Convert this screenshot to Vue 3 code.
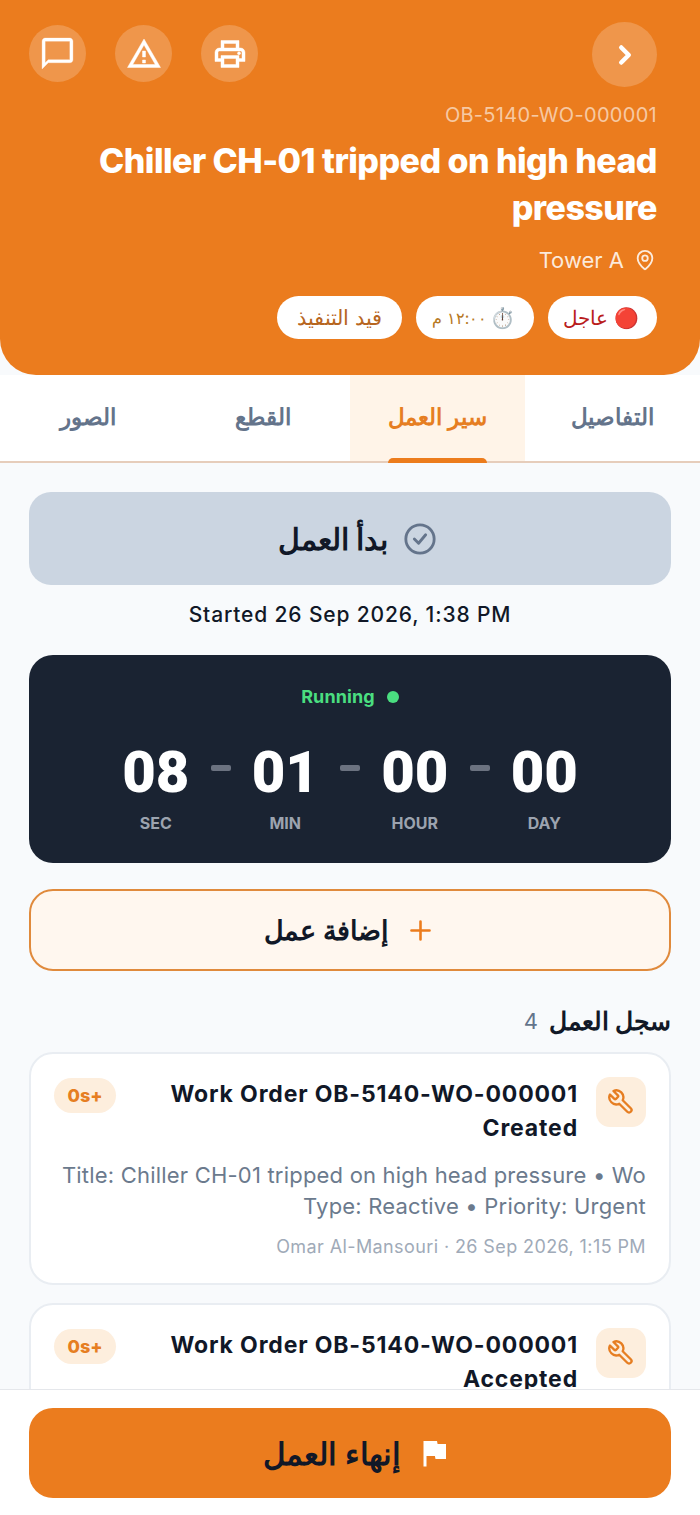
<template>
  <div class="page" dir="rtl">
    <header class="hero">
      <div class="hero-top">
        <button class="back">
          <svg width="30" height="30" viewBox="0 0 24 24" fill="none" stroke="#fff" stroke-width="3.6" stroke-linecap="round" stroke-linejoin="round"><path d="m9 18 6-6-6-6" /></svg>
        </button>
        <div class="actions">
          <button class="round">
            <svg width="36" height="36" viewBox="0 0 24 24" fill="#fff" stroke="#fff" stroke-width="0.3"><path d="M19 8h-1V3H6v5H5c-1.66 0-3 1.34-3 3v6h4v4h12v-4h4v-6c0-1.66-1.34-3-3-3zM8 5h8v3H8V5zm8 12v2H8v-4h8v2zm2-2v-2H6v2H4v-4c0-.55.45-1 1-1h14c.55 0 1 .45 1 1v4h-2z" /><circle cx="18" cy="11.5" r="1" /></svg>
          </button>
          <button class="round">
            <svg width="36" height="36" viewBox="0 0 24 24" fill="#fff" stroke="#fff" stroke-width="0.3"><path d="M12 5.99 19.53 19H4.47L12 5.99M12 2 1 21h22L12 2zm1 14h-2v2h2v-2zm0-6h-2v4h2v-4z" /></svg>
          </button>
          <button class="round">
            <svg width="37" height="37" viewBox="0 0 24 24" fill="#fff" stroke="#fff" stroke-width="0.2"><path d="M20 2H4c-1.1 0-2 .9-2 2v18l4-4h14c1.1 0 2-.9 2-2V4c0-1.1-.9-2-2-2zm0 14H6l-2 2V4h16v12z" /></svg>
          </button>
        </div>
      </div>
      <div class="code">OB-5140-WO-000001</div>
      <h1 class="title">Chiller CH-01 tripped on high head pressure</h1>
      <div class="place">
        <svg width="22" height="22" viewBox="0 0 24 24" fill="none" stroke="currentColor" stroke-width="2" stroke-linecap="round" stroke-linejoin="round"><path d="M20 10c0 4.99-5.54 10.19-7.4 11.8a1 1 0 0 1-1.2 0C9.54 20.19 4 14.99 4 10a8 8 0 0 1 16 0" /><circle cx="12" cy="10" r="3" /></svg>
        <span>Tower A</span>
      </div>
      <div class="chips">
        <span class="chip urgent">🔴 عاجل</span>
        <span class="chip time"><span class="clock-emoji">⏱️</span><span class="time-text">١٢:٠٠ م</span></span>
        <span class="chip status">قيد التنفيذ</span>
      </div>
    </header>

    <nav class="tabs">
      <div v-for="t in tabs" :key="t" class="tab" :class="{ active: t === activeTab }">
        <span class="tab-label">{{ t }}</span>
      </div>
    </nav>

    <main class="content">
      <button class="start-btn">
        <svg width="34" height="34" viewBox="0 0 24 24" fill="none" stroke="#64748b" stroke-width="2" stroke-linecap="round" stroke-linejoin="round"><circle cx="12" cy="12" r="10" /><path d="m8 12 3 3 5-6" /></svg>
        <span>بدأ العمل</span>
      </button>
      <p class="started" dir="ltr">Started 26 Sep 2026, 1:38 PM</p>

      <section class="timer">
        <div class="running"><i class="dot"></i><span>Running</span></div>
        <div class="clock">
          <template v-for="(c, i) in clock" :key="c.label">
            <i v-if="i > 0" class="sep"></i>
            <div class="unit">
              <b>{{ c.value }}</b>
              <small>{{ c.label }}</small>
            </div>
          </template>
        </div>
      </section>

      <button class="add-btn">
        <svg width="31" height="31" viewBox="0 0 24 24" fill="none" stroke="#ec7c1c" stroke-width="2" stroke-linecap="round"><path d="M5 12h14M12 5v14" /></svg>
        <span>إضافة عمل</span>
      </button>

      <div class="log-head">
        <span class="log-title">سجل العمل</span>
        <span class="log-count">4</span>
      </div>

      <article v-for="(e, i) in entries" :key="i" class="entry">
        <div class="entry-top">
          <div class="tile">
            <svg width="28" height="28" viewBox="0 0 24 24" fill="none" stroke="#e67e22" stroke-width="2" stroke-linecap="round" stroke-linejoin="round"><path d="M9.3 6.3a1 1 0 0 1 0 1.4L7.7 9.3a1 1 0 0 1-1.4 0L2.53 5.53a6 6 0 0 0 7.94 7.94l6.91 6.91a2.12 2.12 0 0 0 3-3l-6.91-6.91a6 6 0 0 0-7.94-7.94l3.76 3.76z" /></svg>
          </div>
          <h3>{{ e.title }}</h3>
          <span class="badge" dir="ltr">0s+</span>
        </div>
        <p class="desc">{{ e.desc }}</p>
        <p class="meta">{{ e.meta }}</p>
      </article>
    </main>

    <footer class="bottom">
      <button class="finish-btn">
        <svg width="36" height="36" viewBox="0 0 24 24" fill="#fff"><path d="M14.4 6 14 4H5v17h2v-7h5.6l.4 2h7V6z" /></svg>
        <span>إنهاء العمل</span>
      </button>
    </footer>
  </div>
</template>

<script setup>
const tabs = ['التفاصيل', 'سير العمل', 'القطع', 'الصور']
const activeTab = 'سير العمل'

const clock = [
  { value: '00', label: 'DAY' },
  { value: '00', label: 'HOUR' },
  { value: '01', label: 'MIN' },
  { value: '08', label: 'SEC' }
]

const entries = [
  {
    title: 'Work Order OB-5140-WO-000001 Created',
    desc: 'Title: Chiller CH-01 tripped on high head pressure • Wo Type: Reactive • Priority: Urgent',
    meta: 'Omar Al-Mansouri · 26 Sep 2026, 1:15 PM'
  },
  {
    title: 'Work Order OB-5140-WO-000001 Accepted',
    desc: 'Accepted by Omar Al-Mansouri',
    meta: 'Omar Al-Mansouri · 26 Sep 2026, 1:20 PM'
  }
]
</script>

<style>
html, body { margin: 0; background: #f8fafc; }
</style>

<style scoped>
.page {
  width: 700px;
  height: 1515px;
  display: flex;
  flex-direction: column;
  overflow: hidden;
  background: #f8fafc;
  font-family: Inter, sans-serif;
  color: #111827;
}

button {
  border: none;
  font-family: inherit;
  padding: 0;
}

.hero {
  flex: none;
  height: 375px;
  box-sizing: border-box;
  padding: 22px 43px 0 29px;
  background: #eb7c1e;
  border-radius: 0 0 36px 36px;
  color: #fff;
}

.hero-top {
  display: flex;
  justify-content: space-between;
  align-items: center;
  height: 65px;
}

.back {
  width: 65px;
  height: 65px;
  border-radius: 50%;
  background: rgba(255, 255, 255, 0.2);
  display: flex;
  align-items: center;
  justify-content: center;
}

.actions {
  display: flex;
  gap: 29px;
  margin-top: -2px;
}

.round {
  width: 57px;
  height: 57px;
  border-radius: 50%;
  background: rgba(255, 255, 255, 0.2);
  display: flex;
  align-items: center;
  justify-content: center;
}

.code {
  margin-top: 16px;
  font-size: 20px;
  line-height: 24px;
  color: rgba(255, 255, 255, 0.6);
  direction: ltr;
  text-align: right;
  letter-spacing: 0.3px;
}

.title {
  margin: 10px 0 0;
  font-size: 34px;
  line-height: 47px;
  font-weight: 800;
  letter-spacing: -0.55px;
  text-align: right;
}

.place {
  margin-top: 14px;
  display: flex;
  align-items: center;
  gap: 10px;
  font-size: 22px;
  line-height: 30px;
  color: rgba(255, 255, 255, 0.85);
}

.place svg {
  margin-right: 1px;
}

.chips {
  margin-top: 21px;
  display: flex;
  gap: 14px;
}

.chip {
  height: 43px;
  display: flex;
  align-items: center;
  padding: 0 18px;
  border-radius: 22px;
  background: #fff;
  font-size: 20px;
}

.urgent {
  color: #b91c1c;
  padding-left: 15px;
}

.time {
  color: #b7791f;
  gap: 3px;
  padding-right: 19px;
  padding-left: 16px;
}

.time-text {
  font-size: 16px;
  white-space: nowrap;
}

.status {
  color: #b7661f;
  font-size: 21px;
  padding: 0 20px;
}

.tabs {
  flex: none;
  height: 88px;
  display: grid;
  grid-template-columns: repeat(4, 1fr);
  background: #fff;
  border-bottom: 2px solid #e6cdbb;
  box-sizing: border-box;
}

.tab {
  display: flex;
  justify-content: center;
  color: #64748b;
  font-size: 23px;
  font-weight: 700;
}

.tab-label {
  height: 86px;
  line-height: 84px;
  position: relative;
}

.tab.active {
  background: #fff4e8;
  color: #e67e22;
}

.tab.active .tab-label::after {
  content: "";
  position: absolute;
  left: 0;
  right: 0;
  bottom: -2px;
  height: 5px;
  border-radius: 5px 5px 0 0;
  background: #ec7c1c;
}

.content {
  flex: 1;
  min-height: 0;
  overflow: hidden;
  padding: 29px 29px 0;
}

.start-btn {
  width: 100%;
  height: 93px;
  border-radius: 22px;
  background: #cbd5e1;
  display: flex;
  align-items: center;
  justify-content: center;
  gap: 15px;
  font-size: 30px;
  font-weight: 700;
  color: #111827;
}

.start-btn span,
.finish-btn span {
  padding-left: 15px;
}

.started {
  margin: 16px 0 0;
  text-align: center;
  font-size: 21px;
  line-height: 28px;
  font-weight: 500;
  letter-spacing: 0.85px;
  color: #111827;
}

.timer {
  margin-top: 26px;
  height: 208px;
  box-sizing: border-box;
  padding-top: 30px;
  border-radius: 24px;
  background: #1a2332;
  color: #fff;
}

.running {
  display: flex;
  align-items: center;
  justify-content: center;
  gap: 12px;
  color: #4ade80;
  font-size: 18px;
  line-height: 24px;
  font-weight: 700;
  letter-spacing: 0.1px;
}

.dot {
  width: 12px;
  height: 12px;
  border-radius: 50%;
  background: #4ade80;
}

.clock {
  margin-top: 31px;
  display: flex;
  justify-content: center;
  align-items: flex-start;
}

.unit {
  width: 109.5px;
  display: flex;
  flex-direction: column;
  align-items: center;
}

.unit b {
  font-family: Roboto, sans-serif;
  font-size: 58px;
  line-height: 64px;
  font-weight: 900;
}

.unit small {
  margin-top: 8px;
  font-size: 16px;
  line-height: 22px;
  font-weight: 700;
  color: #9ca3af;
}

.sep {
  width: 20px;
  height: 6px;
  margin-top: 25px;
  border-radius: 2px;
  background: #6b7280;
}

.add-btn {
  margin-top: 26px;
  width: 100%;
  height: 82px;
  box-sizing: border-box;
  border: 2px solid #e08a3c;
  border-radius: 24px;
  background: #fff7ef;
  display: flex;
  align-items: center;
  justify-content: center;
  gap: 16px;
  font-size: 27px;
  font-weight: 700;
  color: #111827;
}

.log-head {
  margin-top: 34px;
  display: flex;
  align-items: center;
  gap: 11px;
  height: 32px;
}

.log-title {
  font-size: 25px;
  font-weight: 700;
}

.log-count {
  font-size: 22px;
  color: #64748b;
}

.entry {
  margin-top: 15px;
  box-sizing: border-box;
  height: 233px;
  padding: 23px 23px 0;
  background: #fff;
  border: 2px solid #e9edf2;
  border-radius: 24px;
}

.entry + .entry {
  margin-top: 18px;
}

.entry-top {
  display: flex;
  align-items: flex-start;
  gap: 18px;
}

.tile {
  flex: none;
  width: 50px;
  height: 50px;
  border-radius: 14px;
  background: #fdeedd;
  display: flex;
  align-items: center;
  justify-content: center;
}

.entry-top h3 {
  flex: 1;
  margin: 0;
  font-size: 23px;
  line-height: 34px;
  font-weight: 700;
  letter-spacing: 0.85px;
}

.badge {
  flex: none;
  width: 62px;
  height: 35px;
  margin-top: 1px;
  border-radius: 18px;
  background: #fdeedd;
  color: #e67e22;
  font-size: 18px;
  font-weight: 800;
  line-height: 35px;
  text-align: center;
}

.desc {
  margin: 15px 0 0;
  font-size: 22px;
  line-height: 31px;
  letter-spacing: 0.2px;
  color: #6b7a8d;
}

.meta {
  margin: 13px 0 0;
  font-size: 18px;
  line-height: 24px;
  letter-spacing: 0.4px;
  color: #a0aab8;
}

.bottom {
  flex: none;
  height: 126px;
  box-sizing: border-box;
  padding: 18px 29px 0;
  background: #fff;
  border-top: 1px solid #e5e7eb;
}

.finish-btn {
  width: 100%;
  height: 90px;
  border-radius: 24px;
  background: #eb7c1e;
  display: flex;
  align-items: center;
  justify-content: center;
  gap: 15px;
  font-size: 31px;
  font-weight: 700;
  color: #111827;
}
</style>
